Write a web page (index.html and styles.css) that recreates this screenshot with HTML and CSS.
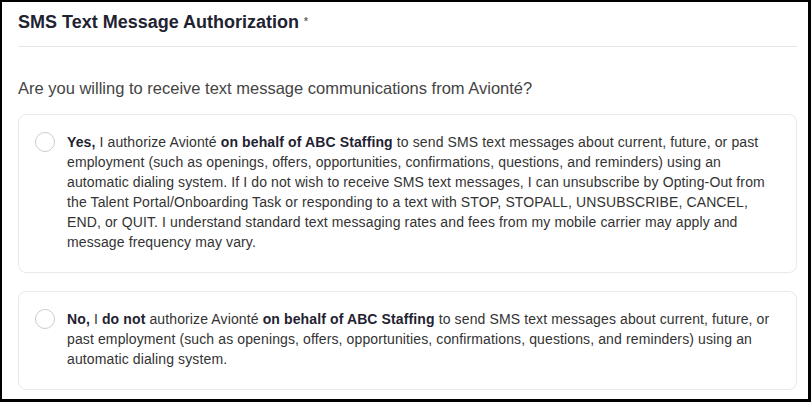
FILE: index.html
```html
<!DOCTYPE html>
<html lang="en">
<head>
    <meta charset="UTF-8">
    <title>SMS Text Message Authorization</title>
    <link rel="stylesheet" href="styles.css">
</head>
<body>

<div class="frame">
    <div class="section-title">SMS Text Message Authorization <span class="required">*</span></div>
    <hr class="divider">

    <p class="question">Are you willing to receive text message communications from Avionté?</p>

    <label class="option">
        <span class="radio"></span>
        <span class="option-text"><b>Yes,</b> I authorize Avionté <b>on behalf of ABC Staffing</b> to send SMS text messages about current, future, or past employment (such as openings, offers, opportunities, confirmations, questions, and reminders) using an automatic dialing system. If I do not wish to receive SMS text messages, I can unsubscribe by Opting-Out from the Talent Portal/Onboarding Task or responding to a text with STOP, STOPALL, UNSUBSCRIBE, CANCEL, END, or QUIT. I understand standard text messaging rates and fees from my mobile carrier may apply and message frequency may vary.</span>
    </label>

    <label class="option">
        <span class="radio"></span>
        <span class="option-text"><b>No,</b> I <b>do not</b> authorize Avionté <b>on behalf of ABC Staffing</b> to send SMS text messages about current, future, or past employment (such as openings, offers, opportunities, confirmations, questions, and reminders) using an automatic dialing system.</span>
    </label>
</div>

</body>
</html>
```

FILE: styles.css
```css
body {
    margin: 0;
    padding: 0;
    font-family: "Liberation Sans", Arial, sans-serif;
    background: #fff;
}

.frame {
    box-sizing: border-box;
    width: 811px;
    height: 402px;
    border-style: solid;
    border-color: #000;
    border-width: 2px 3px 3px 2px;
    padding: 10px 11px 0 16px;
    overflow: hidden;
}

.section-title {
    font-size: 18px;
    font-weight: 700;
    color: #1f2331;
    line-height: 20px;
}

.required {
    font-size: 10px;
    color: #666;
    vertical-align: top;
}

.divider {
    border: none;
    border-top: 1px solid #e6e7ea;
    margin: 14px 0 0 0;
}

.question {
    font-size: 16.5px;
    color: #444;
    margin: 30px 0 15px 0;
    line-height: 22px;
}

.option {
    display: flex;
    align-items: flex-start;
    gap: 12px;
    border: 1px solid #e8e9ec;
    border-radius: 8px;
    padding: 17px 24px 20px 16px;
    margin-bottom: 18px;
}

.radio {
    flex: none;
    box-sizing: border-box;
    width: 20px;
    height: 20px;
    border: 1px solid #c9ccd3;
    border-radius: 50%;
}

.option-text {
    font-size: 14px;
    line-height: 20px;
    letter-spacing: 0.12px;
    color: #333;
}

.option-text b {
    color: #1f2331;
    font-weight: 700;
}
```
